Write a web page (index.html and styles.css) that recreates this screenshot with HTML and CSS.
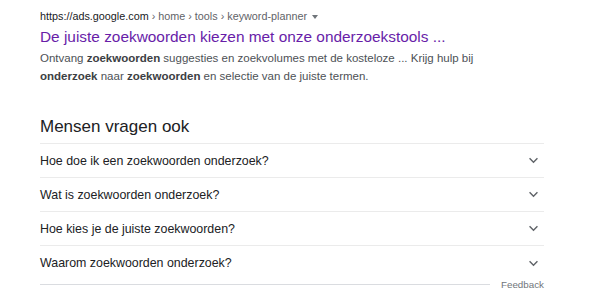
FILE: index.html
```html
<!DOCTYPE html>
<html lang="nl">
<head>
  <meta charset="UTF-8">
  <title>zoekwoorden onderzoek</title>
  <link rel="stylesheet" href="styles.css">
</head>
<body>

  <div class="results">
    <div class="result">
      <div class="crumbs">
        <span class="domain">https://ads.google.com</span> › home › tools › keyword-planner
        <span class="caret"></span>
      </div>
      <a class="result-title" href="#">De juiste zoekwoorden kiezen met onze onderzoekstools ...</a>
      <p class="snippet">
        Ontvang <b>zoekwoorden</b> suggesties en zoekvolumes met de kosteloze ... Krijg hulp bij<br>
        <b>onderzoek</b> naar <b>zoekwoorden</b> en selectie van de juiste termen.
      </p>
    </div>

    <div class="questions">
      <h2>Mensen vragen ook</h2>
      <div class="question">
        <span>Hoe doe ik een zoekwoorden onderzoek?</span>
        <svg class="chevron" viewBox="0 0 12 8"><path d="M1.5 1.5 L6 6 L10.5 1.5" /></svg>
      </div>
      <div class="question">
        <span>Wat is zoekwoorden onderzoek?</span>
        <svg class="chevron" viewBox="0 0 12 8"><path d="M1.5 1.5 L6 6 L10.5 1.5" /></svg>
      </div>
      <div class="question">
        <span>Hoe kies je de juiste zoekwoorden?</span>
        <svg class="chevron" viewBox="0 0 12 8"><path d="M1.5 1.5 L6 6 L10.5 1.5" /></svg>
      </div>
      <div class="question last">
        <span>Waarom zoekwoorden onderzoek?</span>
        <svg class="chevron" viewBox="0 0 12 8"><path d="M1.5 1.5 L6 6 L10.5 1.5" /></svg>
      </div>
      <div class="feedback-row">
        <div class="feedback-line"></div>
        <span class="feedback">Feedback</span>
      </div>
    </div>
  </div>

</body>
</html>
```

FILE: styles.css
```css
body {
  margin: 0;
  background-color: #fff;
  font-family: 'Liberation Sans', Arial, sans-serif;
  color: #202124;
}

.results {
  width: 504px;
  padding: 7px 0 0 40px;
}

.crumbs {
  font-size: 10.8px;
  line-height: 18px;
  color: #5f6368;
  white-space: nowrap;
}

.crumbs .domain {
  color: #202124;
}

.caret {
  display: inline-block;
  margin-left: 2px;
  border-left: 3px solid transparent;
  border-right: 3px solid transparent;
  border-top: 4px solid #70757a;
  vertical-align: middle;
}

.result-title {
  display: block;
  margin-top: 1px;
  font-size: 15.4px;
  line-height: 22px;
  color: #681da8;
  text-decoration: none;
  white-space: nowrap;
}

.snippet {
  margin: 1px 0 0;
  font-size: 11.5px;
  line-height: 18px;
  color: #4d5156;
  white-space: nowrap;
}

.snippet b {
  color: #3c4043;
}

.questions {
  margin-top: 31px;
}

.questions h2 {
  margin: 0;
  padding-bottom: 5px;
  font-size: 17px;
  font-weight: normal;
  line-height: 22px;
  color: #202124;
  border-bottom: 1px solid #ebebeb;
}

.question {
  display: flex;
  justify-content: space-between;
  align-items: center;
  height: 33px;
  padding-right: 5px;
  font-size: 12.4px;
  color: #202124;
  border-bottom: 1px solid #ebebeb;
}

.question.last {
  height: 34px;
  border-bottom: none;
}

.chevron {
  width: 11px;
  height: 7px;
  fill: none;
  stroke: #5f6368;
  stroke-width: 1.6;
}

.feedback-row {
  display: flex;
  align-items: center;
  gap: 11px;
  height: 8px;
}

.feedback-line {
  flex: 1;
  border-top: 1px solid #dadce0;
}

.feedback {
  font-size: 9.8px;
  color: #70757a;
}
```
